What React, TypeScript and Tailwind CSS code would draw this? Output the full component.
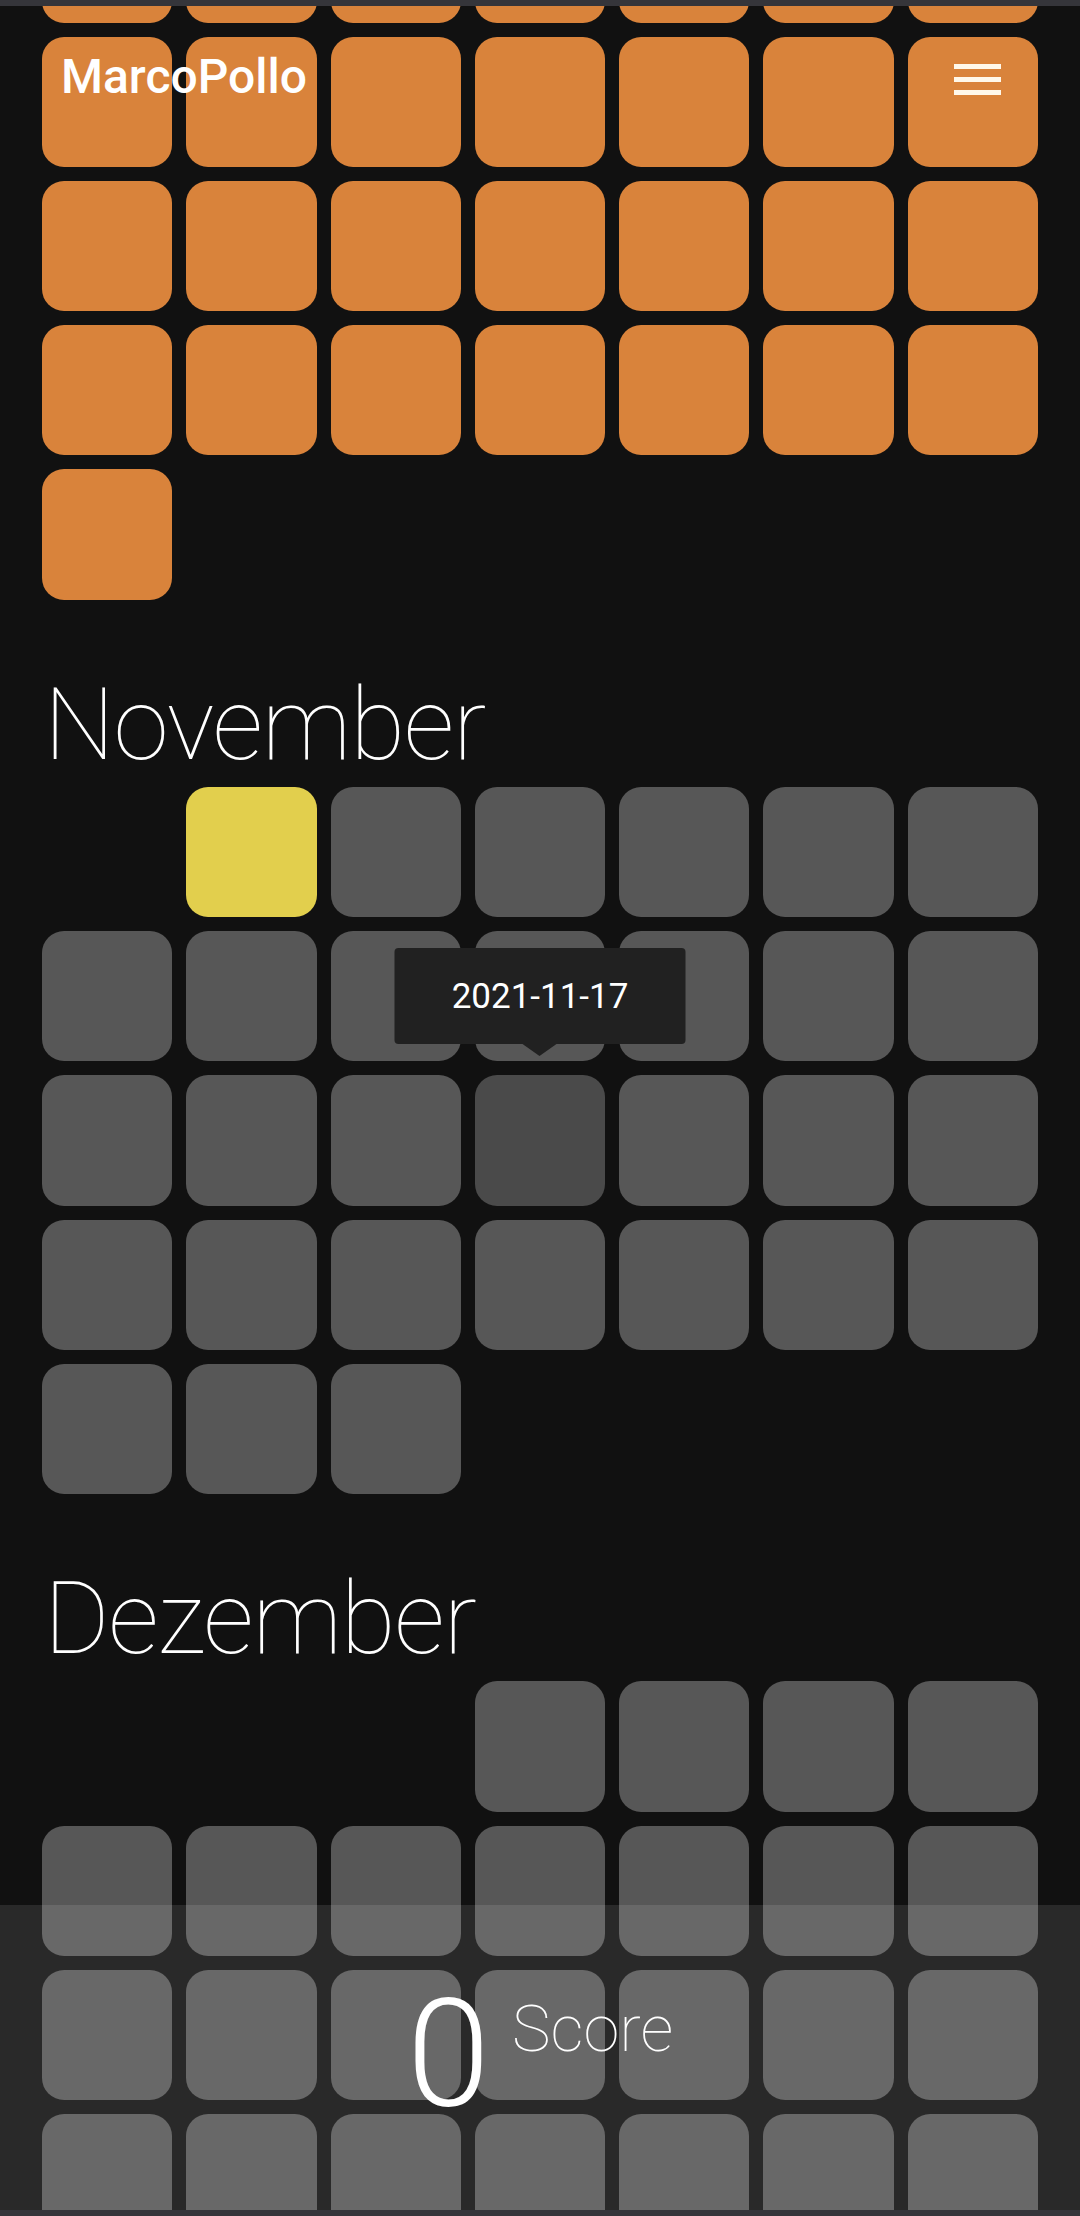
import React from "react";

const ORANGE = "bg-[#d9833b]";
const GRAY = "bg-[#575757]";

type CellKind = "orange" | "gray" | "yellow" | "hover";

function Cell({ kind, tooltip }: { kind: CellKind; tooltip?: string }) {
  const color =
    kind === "orange"
      ? ORANGE
      : kind === "yellow"
      ? "bg-[#e2cf4d]"
      : kind === "hover"
      ? "bg-[#4a4a4a]"
      : GRAY;
  return (
    <div className={`relative aspect-square rounded-[22px] ${color}`}>
      {tooltip && (
        <div className="absolute bottom-full left-1/2 z-20 mb-[31px] -translate-x-1/2">
          <div className="flex h-[96px] w-[291px] items-center justify-center rounded-[4px] bg-[#212121] text-[35px] leading-none text-white [font-family:Roboto,'Liberation_Sans',sans-serif]">
            {tooltip}
          </div>
          <div className="absolute left-1/2 top-full h-0 w-0 -translate-x-1/2 border-x-[17px] border-t-[12px] border-x-transparent border-t-[#212121]" />
        </div>
      )}
    </div>
  );
}

function MonthGrid({
  offset,
  days,
  kindFor,
  tooltipFor,
}: {
  offset: number;
  days: number;
  kindFor: (d: number) => CellKind;
  tooltipFor?: (d: number) => string | undefined;
}) {
  const blanks = Array.from({ length: offset });
  const ds = Array.from({ length: days }, (_, i) => i + 1);
  return (
    <div className="grid grid-cols-7 gap-[14px]">
      {blanks.map((_, i) => (
        <div key={`b${i}`} />
      ))}
      {ds.map((d) => (
        <Cell key={d} kind={kindFor(d)} tooltip={tooltipFor ? tooltipFor(d) : undefined} />
      ))}
    </div>
  );
}

function MonthTitle({ children }: { children: React.ReactNode }) {
  return (
    <h2 className="mt-[75px] mb-[12px] h-[100px] pl-[2px] text-[100px] font-thin leading-none tracking-[-1.2px] text-white [font-family:Roboto,'Liberation_Sans',sans-serif]">
      {children}
    </h2>
  );
}

export default function App() {
  return (
    <div className="flex h-[2216px] w-[1080px] flex-col overflow-hidden bg-[#111111] [font-family:Roboto,'Liberation_Sans',sans-serif]">
      <div className="h-[6px] shrink-0 bg-[#35353a]" />
      <main className="relative min-h-0 flex-1 overflow-hidden">
        <div className="-mt-[258px] px-[42px]">
          <MonthGrid offset={5} days={31} kindFor={() => "orange"} />
          <MonthTitle>November</MonthTitle>
          <MonthGrid
            offset={1}
            days={30}
            kindFor={(d) => (d === 1 ? "yellow" : d === 17 ? "hover" : "gray")}
            tooltipFor={(d) => (d === 17 ? "2021-11-17" : undefined)}
          />
          <MonthTitle>Dezember</MonthTitle>
          <MonthGrid offset={3} days={31} kindFor={() => "gray"} />
        </div>

        <header className="absolute left-0 right-0 top-0 z-30">
          <div className="absolute left-[61px] top-[47px] text-[48px] font-medium leading-none text-white">
            MarcoPollo
          </div>
          <button className="absolute left-[954px] top-[58px] flex w-[47px] flex-col gap-[8px]">
            <span className="block h-[5px] w-full bg-[#fff8ea]" />
            <span className="block h-[5px] w-full bg-[#fff8ea]" />
            <span className="block h-[5px] w-full bg-[#fff8ea]" />
          </button>
        </header>

        <div className="absolute bottom-0 left-0 right-0 z-30 flex h-[305px] items-start justify-center gap-[22px] bg-white/10 pt-[75px]">
          <span className="text-[150px] font-light leading-none text-white">0</span>
          <span className="mt-[17px] text-[65px] font-thin leading-none text-white">Score</span>
        </div>
      </main>
      <div className="h-[6px] shrink-0 bg-[#35353a]" />
    </div>
  );
}
